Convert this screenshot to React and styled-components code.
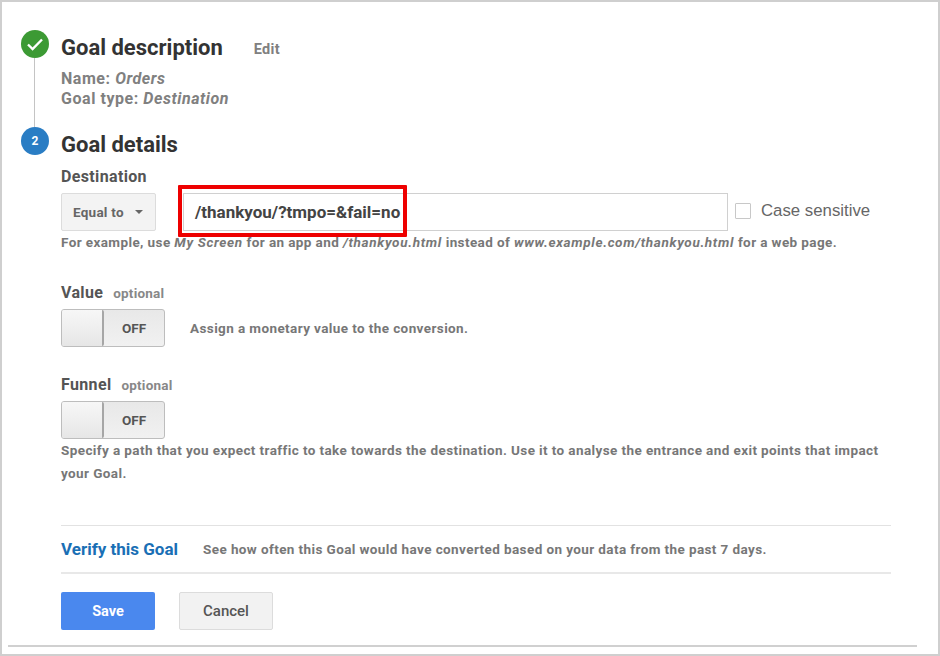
import styled, { createGlobalStyle } from "styled-components";

const Global = createGlobalStyle`
  html, body { margin: 0; padding: 0; background: #fff; }
  body { font-family: Roboto, "Liberation Sans", sans-serif; }
`;

const App = () => {
  return (
    <Frame>
      <Global />
      <Inner>
        <Step $height={97}>
          <Rail>
            <Circle $color="#3c9a34">
              <svg width="18" height="14" viewBox="0 0 18 14" fill="none">
                <path d="M2 7.5l4.6 4.5L16 2.5" stroke="#fff" strokeWidth="2.4" />
              </svg>
            </Circle>
            <RailLine />
          </Rail>
          <StepBody>
            <TitleRow>
              <Title>Goal description</Title>
              <EditLink>Edit</EditLink>
            </TitleRow>
            <Summary>
              <div>Name: <em>Orders</em></div>
              <div>Goal type: <em>Destination</em></div>
            </Summary>
          </StepBody>
        </Step>

        <Step>
          <Rail>
            <Circle $color="#2a7dc4"><Num>2</Num></Circle>
          </Rail>
          <StepBody>
            <TitleRow>
              <Title>Goal details</Title>
            </TitleRow>

            <FieldLabel $top={7}>Destination</FieldLabel>
            <DestRow>
              <Select>Equal to<Caret /></Select>
              <Highlight>
                <TextInput>/thankyou/?tmpo=&amp;fail=no</TextInput>
              </Highlight>
              <CheckBox />
              <CheckLabel>Case sensitive</CheckLabel>
            </DestRow>
            <Hint $top={-1}>
              For example, use <em>My Screen</em> for an app and <em>/thankyou.html</em> instead of <em>www.example.com/thankyou.html</em> for a web page.
            </Hint>

            <FieldLabel $top={30}>Value<Optional>optional</Optional></FieldLabel>
            <ToggleRow>
              <Toggle><Knob /><OffText>OFF</OffText></Toggle>
              <Hint>Assign a monetary value to the conversion.</Hint>
            </ToggleRow>

            <FieldLabel $top={29}>Funnel<Optional>optional</Optional></FieldLabel>
            <ToggleRow>
              <Toggle><Knob /><OffText>OFF</OffText></Toggle>
            </ToggleRow>
            <Hint $line={23}>
              Specify a path that you expect traffic to take towards the destination. Use it to analyse the entrance and exit points that impact your Goal.
            </Hint>

            <VerifyRow>
              <VerifyLink>Verify this Goal</VerifyLink>
              <Hint>See how often this Goal would have converted based on your data from the past 7 days.</Hint>
            </VerifyRow>

            <Actions>
              <SaveButton>Save</SaveButton>
              <CancelButton>Cancel</CancelButton>
            </Actions>
          </StepBody>
        </Step>
      </Inner>
      <BottomRule />
    </Frame>
  );
};

const Frame = styled.div`
  box-sizing: border-box;
  width: 940px;
  height: 656px;
  border: 2px solid #cfcfcf;
  display: flex;
  flex-direction: column;
  overflow: hidden;
`;

const Inner = styled.div`
  flex: 1;
  padding: 28px 47px 0 19px;
`;

const Step = styled.section`
  display: flex;
  gap: 12px;
  height: ${({ $height }) => ($height ? `${$height}px` : "auto")};
`;

const Rail = styled.div`
  width: 28px;
  display: flex;
  flex-direction: column;
  align-items: center;
`;

const Circle = styled.div`
  width: 28px;
  height: 28px;
  flex: none;
  border-radius: 50%;
  background: ${({ $color }) => $color};
  display: flex;
  align-items: center;
  justify-content: center;
`;

const Num = styled.span`
  color: #fff;
  font-size: 12px;
  font-weight: 700;
`;

const RailLine = styled.div`
  flex: 1;
  width: 1px;
  margin-right: 1px;
  background: #c4c4c4;
`;

const StepBody = styled.div`
  flex: 1;
  min-width: 0;
`;

const TitleRow = styled.div`
  display: flex;
  align-items: center;
  height: 34px;
`;

const Title = styled.h2`
  margin: 0;
  font-size: 22px;
  font-weight: 700;
  color: #333;
`;

const EditLink = styled.span`
  margin-left: 31px;
  margin-top: 5px;
  font-size: 14.5px;
  font-weight: 700;
  letter-spacing: 0.3px;
  color: #808080;
`;

const Summary = styled.div`
  margin-top: 5px;
  font-size: 16px;
  font-weight: 700;
  letter-spacing: 0.55px;
  line-height: 20px;
  color: #808080;
`;

const FieldLabel = styled.div`
  margin-top: ${({ $top }) => $top}px;
  font-size: 16px;
  font-weight: 700;
  letter-spacing: 0.35px;
  line-height: 18px;
  color: #555;
`;

const Optional = styled.span`
  margin-left: 10px;
  font-size: 13.5px;
  letter-spacing: 0.2px;
  color: #888;
`;

const DestRow = styled.div`
  display: flex;
  align-items: center;
  height: 38px;
  margin-top: 7px;
`;

const Select = styled.div`
  box-sizing: border-box;
  width: 95px;
  height: 38px;
  padding-left: 11px;
  display: flex;
  align-items: center;
  background: #f3f3f3;
  border: 1px solid #dcdcdc;
  border-radius: 2px;
  font-size: 13.5px;
  font-weight: 700;
  letter-spacing: 0.25px;
  color: #666;
`;

const Caret = styled.span`
  margin-left: 11px;
  width: 0;
  height: 0;
  border-left: 4px solid transparent;
  border-right: 4px solid transparent;
  border-top: 4px solid #666;
`;

const Highlight = styled.div`
  margin-left: 27px;
  width: 545px;
  position: relative;
  height: 38px;
  display: flex;
  &::after {
    content: "";
    position: absolute;
    left: -5px;
    top: -8px;
    width: 229px;
    height: 52px;
    box-sizing: border-box;
    border: 4px solid #ee0000;
    border-radius: 1px;
  }
`;

const TextInput = styled.div`
  box-sizing: border-box;
  flex: 1;
  height: 38px;
  padding-left: 11px;
  display: flex;
  align-items: center;
  background: #fff;
  border: 1px solid #d0d0d0;
  font-size: 17px;
  font-weight: 700;
  color: #444;
`;

const CheckBox = styled.span`
  box-sizing: border-box;
  margin-left: 7px;
  width: 16px;
  height: 16px;
  margin-top: -2px;
  border: 1px solid #c8c8c8;
  border-radius: 1px;
`;

const CheckLabel = styled.span`
  margin-left: 10px;
  margin-top: -2px;
  font-family: "Liberation Sans", sans-serif;
  font-size: 16.8px;
  color: #666;
`;

const Hint = styled.p`
  margin: ${({ $top }) => $top || 0}px 0 0;
  font-size: 13.5px;
  font-weight: 700;
  letter-spacing: 0.4px;
  line-height: ${({ $line }) => $line || 24}px;
  color: #777;
  em { font-style: italic; letter-spacing: 0.67px; }
`;

const ToggleRow = styled.div`
  display: flex;
  align-items: center;
  gap: 25px;
  margin-top: 7px;
`;

const Toggle = styled.div`
  box-sizing: border-box;
  width: 104px;
  height: 38px;
  display: flex;
  border: 1px solid #bdbdbd;
  border-radius: 3px;
  background: linear-gradient(#e8e8e8, #f1f1f1);
`;

const Knob = styled.div`
  box-sizing: border-box;
  width: 42px;
  height: 36px;
  background: linear-gradient(#f7f7f7, #e6e6e6);
  border-right: 2px solid #a6a6a6;
  border-radius: 2px;
`;

const OffText = styled.span`
  flex: 1;
  display: flex;
  align-items: center;
  justify-content: center;
  font-size: 13.5px;
  font-weight: 700;
  color: #555;
`;

const VerifyRow = styled.div`
  display: flex;
  align-items: center;
  gap: 25px;
  height: 46px;
  margin-top: 40px;
  border-top: 1px solid #e2e2e2;
  border-bottom: 2px solid #e8e8e8;
`;

const VerifyLink = styled.span`
  font-size: 17px;
  font-weight: 700;
  color: #1a6fb5;
`;

const Actions = styled.div`
  display: flex;
  gap: 24px;
  margin-top: 18px;
`;

const SaveButton = styled.div`
  width: 94px;
  height: 38px;
  display: flex;
  align-items: center;
  justify-content: center;
  background: #4a88ee;
  border-radius: 2px;
  color: #fff;
  font-size: 14.5px;
  font-weight: 700;
`;

const CancelButton = styled.div`
  box-sizing: border-box;
  width: 94px;
  height: 38px;
  display: flex;
  align-items: center;
  justify-content: center;
  background: #f2f2f2;
  border: 1px solid #dcdcdc;
  border-radius: 2px;
  color: #555;
  font-size: 15px;
  font-weight: 500;
`;

const BottomRule = styled.div`
  margin: 0 21px 7px 6px;
  height: 2px;
  background: #d0d0d0;
`;

export default App;
